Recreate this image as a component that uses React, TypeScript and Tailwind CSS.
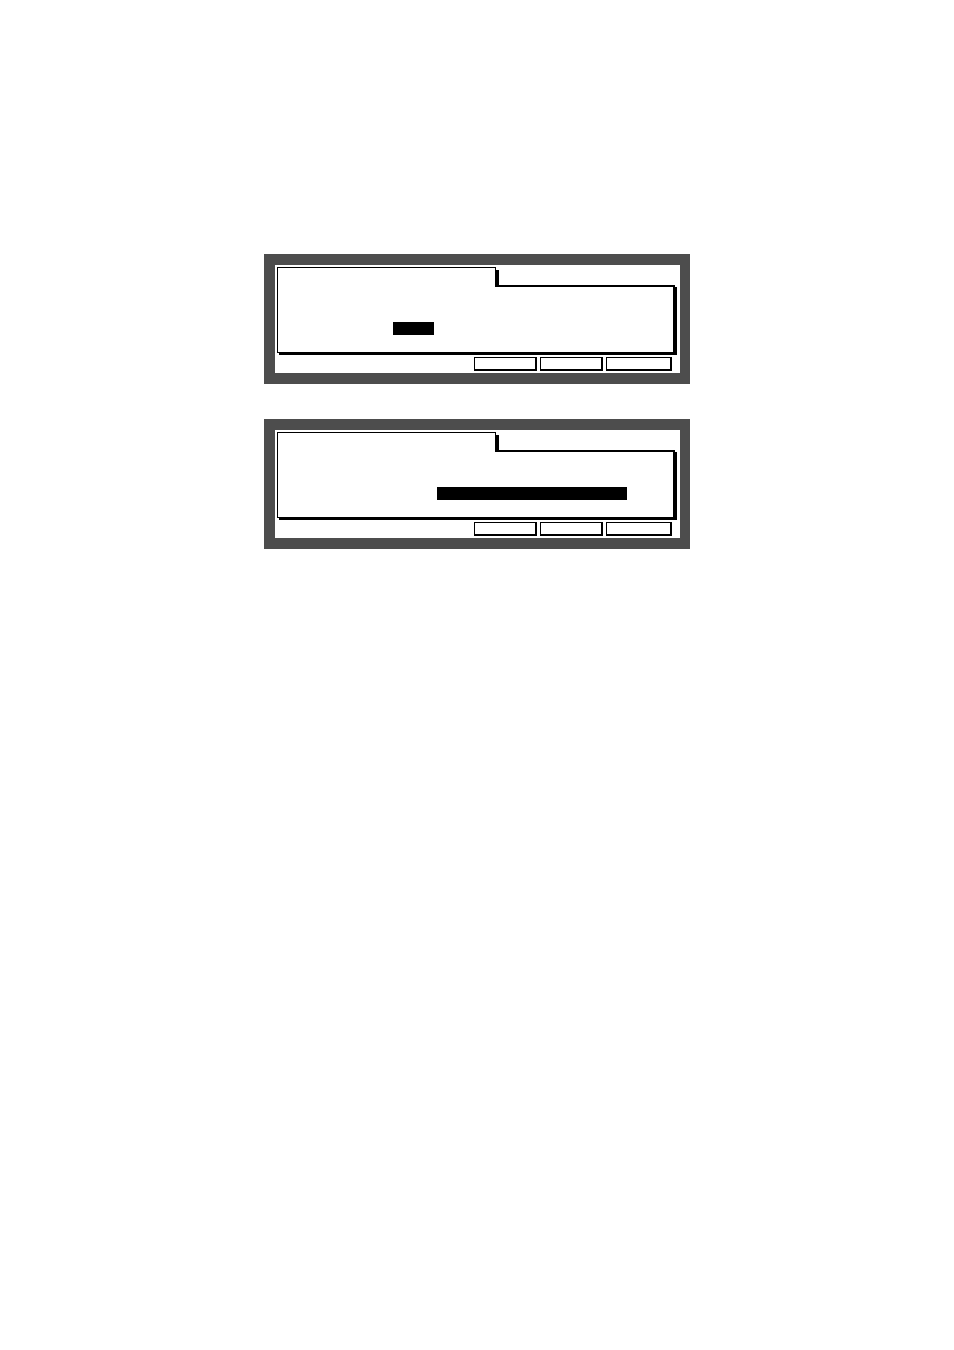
import React from 'react';

interface ScreenProps {
    barOffset: number;
    barWidth: number;
}

function Screen({ barOffset, barWidth }: ScreenProps) {
    return (
        <div className="w-[426px] h-[130px] bg-[#4d4d4d] pt-[11px] pl-[11px] pr-[10px] pb-[11px]">
            <div className="w-[405px] h-[108px] bg-white pt-[2px] pl-[2px] flex flex-col">
                {/* Tab */}
                <div className="relative z-10 w-[219px] h-[20px] -mb-[2px] bg-white border-t border-l border-r border-black">
                    <span className="absolute -right-[4px] top-[2px] bottom-[2px] w-[3px] bg-black" />
                </div>
                {/* Body */}
                <div className="w-[398px] h-[68px] border-t-2 border-r-2 border-b border-l border-black shadow-[2px_2px_0_#000]">
                    {/* Highlighted field */}
                    <div className="pt-[35px]">
                        <div
                            className="h-[13px] bg-black"
                            style={{ marginLeft: barOffset, width: barWidth }}
                        />
                    </div>
                </div>
                {/* Soft keys */}
                <div className="flex justify-end gap-[3px] pr-[8px] mt-[4px]">
                    <div className="w-[63px] h-[14px] border border-r-2 border-b-2 border-black" />
                    <div className="w-[63px] h-[14px] border border-r-2 border-b-2 border-black" />
                    <div className="w-[66px] h-[14px] border border-r-2 border-b-2 border-black" />
                </div>
            </div>
        </div>
    );
}

export default function App() {
    return (
        <div className="min-h-[1350px] w-full bg-white flex flex-col items-center pt-[254px] gap-[35px] font-['Liberation_Sans',sans-serif]">
            <Screen barOffset={115} barWidth={41} />
            <Screen barOffset={159} barWidth={190} />
        </div>
    );
}
